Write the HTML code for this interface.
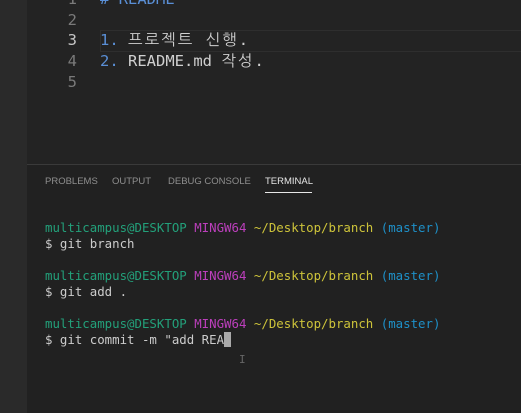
<!DOCTYPE html>
<html><head><meta charset="utf-8"><style>
html,body{margin:0;padding:0;width:521px;height:413px;overflow:hidden;background:#212121;}
.side{position:absolute;left:0;top:0;width:27px;height:413px;background:#2a2a2a;}
.ed{position:absolute;left:27px;top:0;right:0;height:164px;background:#232323;}
.panel{position:absolute;left:27px;top:164px;right:0;bottom:0;background:#212121;border-top:1px solid #3a3a3a;}
.ln{position:absolute;left:55px;width:22px;text-align:right;color:#7a7a7a;font:15.5px "DejaVu Sans Mono","NanumGothic",monospace;}
.lnc{color:#c6c6c6}
.code{position:absolute;left:100px;color:#d0d0d0;font:15.5px "DejaVu Sans Mono","NanumGothic",monospace;white-space:pre;}
.k{letter-spacing:2px}
.b{color:#5a8fd6}
.cur{position:absolute;left:100px;right:0;top:30px;height:20px;border:1px solid #2e2e2e;border-right:none;}
.tab{position:absolute;top:176px;font:9.5px "Liberation Sans",sans-serif;color:#8f8f8f;}
.t{position:absolute;left:45px;font:12.4px "DejaVu Sans Mono",monospace;white-space:pre;color:#cccccc;}
.g{color:#23a07a}.m{color:#bc3fbc}.y{color:#cdc33a}.c{color:#1e90c8}
</style></head><body>
<div class="side"></div>
<div class="ed"></div>
<div class="cur"></div>
<div class="ln" style="top:-10px">1</div><div class="code b" style="top:-10px"># README</div>
<div class="ln" style="top:11px">2</div>
<div class="ln lnc" style="top:31px">3</div><div class="code" style="top:31px"><span class="b">1.</span> <span class="k">프로젝트 신행</span>.</div>
<div class="ln" style="top:52px">4</div><div class="code" style="top:52px"><span class="b">2.</span> README.md <span class="k">작성</span>.</div>
<div class="ln" style="top:73px">5</div>
<div class="panel"></div>
<div class="tab" style="left:45px">PROBLEMS</div>
<div class="tab" style="left:112px">OUTPUT</div>
<div class="tab" style="left:168px">DEBUG CONSOLE</div>
<div class="tab" style="left:265px;color:#e7e7e7">TERMINAL</div>
<div style="position:absolute;left:265px;top:192px;width:47px;height:1px;background:#e7e7e7"></div>
<div class="t" style="top:220px"><span class="g">multicampus@DESKTOP</span> <span class="m">MINGW64</span> <span class="y">~/Desktop/branch</span> <span class="c">(master)</span></div>
<div class="t" style="top:236px">$ git branch</div>
<div class="t" style="top:268px"><span class="g">multicampus@DESKTOP</span> <span class="m">MINGW64</span> <span class="y">~/Desktop/branch</span> <span class="c">(master)</span></div>
<div class="t" style="top:284px">$ git add .</div>
<div class="t" style="top:316px"><span class="g">multicampus@DESKTOP</span> <span class="m">MINGW64</span> <span class="y">~/Desktop/branch</span> <span class="c">(master)</span></div>
<div class="t" style="top:332px">$ git commit -m "add REA<span style="display:inline-block;width:7px;height:15px;background:#aaa;vertical-align:-3px"></span></div>
<div style="position:absolute;left:239px;top:353px;color:#666;font:11px monospace">I</div>
</body></html>
